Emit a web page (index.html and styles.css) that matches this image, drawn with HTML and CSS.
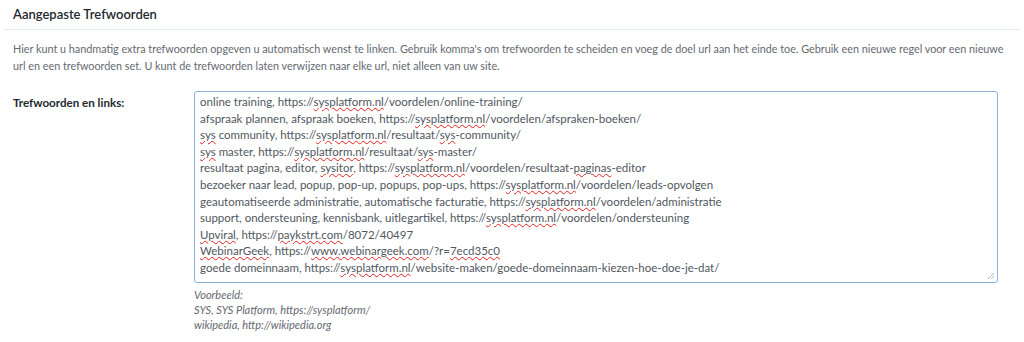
FILE: index.html
```html
<!DOCTYPE html>
<html>
<head>
    <title>Aangepaste Trefwoorden</title>
    <link rel="stylesheet" href="styles.css">
</head>
<body>
    <div class="panel">
        <h2 class="panel-title">Aangepaste Trefwoorden</h2>
        <p class="intro">Hier kunt u handmatig extra trefwoorden opgeven u automatisch wenst te linken. Gebruik komma's om trefwoorden te scheiden en voeg de doel url aan het einde toe. Gebruik een nieuwe regel voor een nieuwe url en een trefwoorden set. U kunt de trefwoorden laten verwijzen naar elke url, niet alleen van uw site.</p>

        <div class="field-row">
            <label class="field-label" for="keywords">Trefwoorden en links:</label>
            <div class="field">
                <div class="textarea" id="keywords" role="textbox" contenteditable="true" spellcheck="false">
                    <div>online training, https://<span class="sp">sysplatform.nl</span>/voordelen/online-training/</div>
                    <div>afspraak plannen, afspraak boeken, https://<span class="sp">sysplatform.nl</span>/voordelen/afspraken-boeken/</div>
                    <div><span class="sp">sys</span> community, https://<span class="sp">sysplatform.nl</span>/resultaat/<span class="sp">sys</span>-community/</div>
                    <div><span class="sp">sys</span> master, https://<span class="sp">sysplatform.nl</span>/resultaat/<span class="sp">sys</span>-master/</div>
                    <div>resultaat pagina, editor, <span class="sp">sysitor</span>, https://<span class="sp">sysplatform.nl</span>/voordelen/resultaat-<span class="sp">paginas</span>-editor</div>
                    <div>bezoeker naar lead, popup, pop-up, popups, pop-ups, https://<span class="sp">sysplatform.nl</span>/voordelen/leads-opvolgen</div>
                    <div>geautomatiseerde administratie, automatische facturatie, https://<span class="sp">sysplatform.nl</span>/voordelen/administratie</div>
                    <div>support, ondersteuning, kennisbank, uitlegartikel, https://<span class="sp">sysplatform.nl</span>/voordelen/ondersteuning</div>
                    <div><span class="sp">Upviral</span>, https://<span class="sp">paykstrt.com</span>/8072/40497</div>
                    <div><span class="sp">WebinarGeek</span>, https://<span class="sp">www.webinargeek.com</span>/?r=<span class="sp">7ecd35c0</span></div>
                    <div>goede domeinnaam, https://<span class="sp">sysplatform.nl</span>/website-maken/goede-domeinnaam-kiezen-hoe-doe-je-dat/</div>
                    <svg class="grip" width="8" height="8" viewBox="0 0 8 8"><path d="M7 1L1 7M7 4L4 7" stroke="#b5b5b5" stroke-width="1"/></svg>
                </div>
                <p class="example">Voorbeeld:<br>SYS, SYS Platform, https://sysplatform/<br>wikipedia, http://wikipedia.org</p>
            </div>
        </div>
    </div>
</body>
</html>
```

FILE: styles.css
```css
body {
    margin: 0;
    background: #fff;
    font-family: "Lato", "Open Sans", sans-serif;
    color: #3c434a;
}
.panel {
    padding: 0 4px;
}
.panel-title {
    margin: 0;
    padding: 6px 9px 7px;
    font-size: 13px;
    font-weight: 600;
    color: #23282d;
    border-bottom: 1px solid #e2ecf3;
}
.intro {
    margin: 10px 0 0;
    padding: 0 9px;
    font-size: 10.8px;
    line-height: 17px;
    color: #646970;
}
.field-row {
    display: flex;
    margin-top: 17px;
}
.field-label {
    width: 181px;
    padding: 5px 0 0 9px;
    font-size: 11.6px;
    font-weight: 700;
    color: #23282d;
}
.field {
    width: 804px;
}
.textarea {
    position: relative;
    height: 183px;
    padding: 2px 5px 5px;
    border: 1px solid #8db2df;
    border-radius: 3px;
    font-size: 11.5px;
    line-height: 16.6px;
    color: #50575e;
    white-space: nowrap;
    outline: none;
}
.sp {
    text-decoration: underline wavy #e02020;
    text-decoration-thickness: 1px;
    text-underline-offset: 1px;
}
.grip {
    position: absolute;
    right: 2px;
    bottom: 2px;
}
.example {
    margin: 4px 0 0;
    font-size: 11px;
    line-height: 15px;
    font-style: italic;
    color: #646970;
}
```
